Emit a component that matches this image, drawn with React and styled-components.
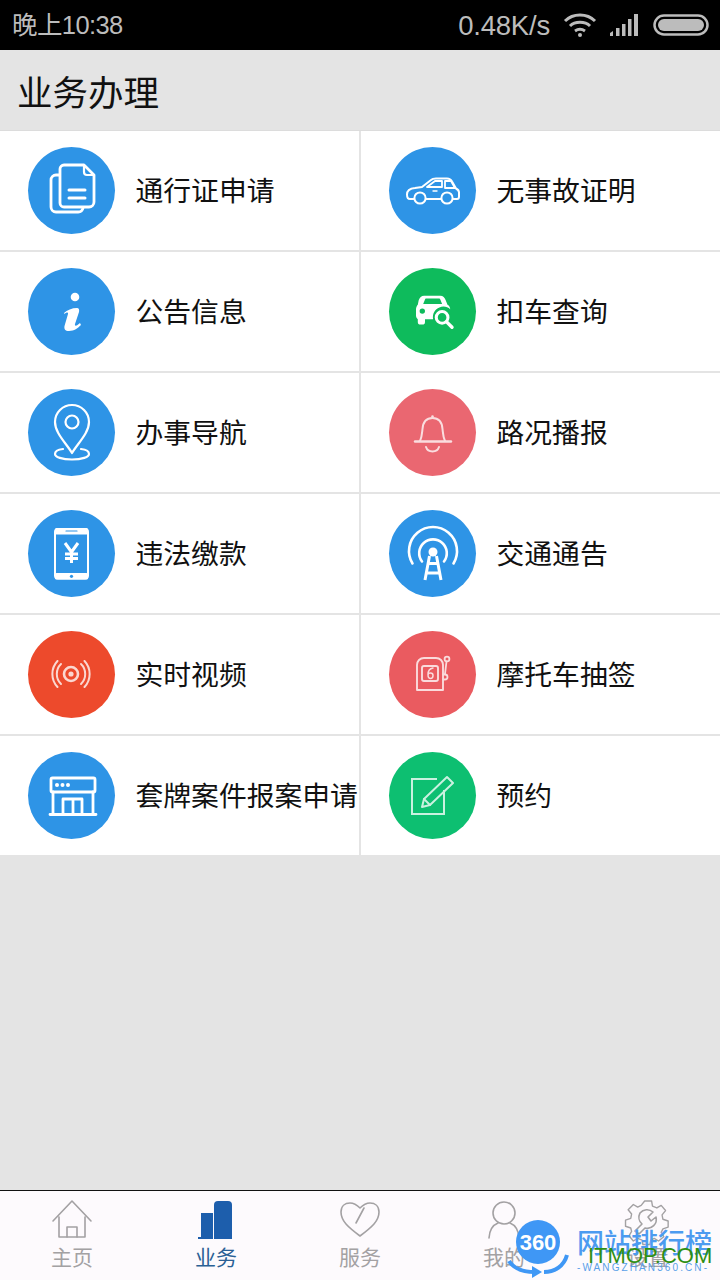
import React from "react";
import styled, { createGlobalStyle } from "styled-components";

const Global = createGlobalStyle`
  html, body { margin: 0; padding: 0; background: #e4e4e4; }
  * { box-sizing: border-box; }
  body { font-family: "Noto Sans CJK SC", "Liberation Sans", sans-serif; }
`;

const Page = styled.div`
  position: relative;
  width: 720px;
  height: 1280px;
  display: flex;
  flex-direction: column;
  overflow: hidden;
  background: #e4e4e4;
`;

const StatusBar = styled.div`
  height: 50px;
  flex: none;
  background: #000;
  color: #bcbcbc;
  display: flex;
  align-items: center;
  padding: 0 11px 0 12px;
  font-family: "Liberation Sans", "Noto Sans CJK SC", sans-serif;
`;

const Clock = styled.span`
  flex: 1;
  font-size: 25.5px;
  letter-spacing: -0.6px;
  margin-bottom: 5px;
`;

const Speed = styled.span`
  font-size: 27.5px;
  letter-spacing: -0.2px;
  margin: 2px 13px 0 0;
`;

const StatusIcons = styled.div`
  display: flex;
  align-items: center;
  gap: 12px;
`;

const Header = styled.div`
  height: 81px;
  flex: none;
  display: flex;
  align-items: center;
  padding: 0 0 0 17px;
  font-size: 35.5px;
  color: #111;
  background: #e4e4e4;
  border-bottom: 1px solid #dcdcdc;
`;

const Grid = styled.div`
  flex: none;
  display: grid;
  grid-template-columns: 361px 359px;
  background: #fff;
`;

const Cell = styled.div`
  height: ${(p) => (p.$last ? "119px" : "121px")};
  display: flex;
  align-items: center;
  padding-left: 28px;
  gap: 20.5px;
  background: #fff;
  border-bottom: ${(p) => (p.$last ? "none" : "2px solid #e4e4e4")};
  border-right: ${(p) => (p.$right ? "none" : "2px solid #e4e4e4")};
  white-space: nowrap;
`;

const Badge = styled.div`
  width: 87px;
  height: 87px;
  flex: none;
  border-radius: 50%;
  background: ${(p) => p.$color};
  display: flex;
  align-items: center;
  justify-content: center;
`;

const Label = styled.span`
  font-size: 27.8px;
  color: #111;
  line-height: 1;
  margin-bottom: 2px;
`;

const Spacer = styled.div`
  flex: 1;
`;

const TabBar = styled.div`
  height: 90px;
  flex: none;
  display: grid;
  grid-template-columns: repeat(5, 1fr);
  background: #fdfafd;
  border-top: 1px solid #111;
`;

const Tab = styled.div`
  display: flex;
  flex-direction: column;
  align-items: center;
  justify-content: flex-start;
  padding-top: 9px;
  font-size: 21px;
  line-height: 1;
  color: ${(p) => (p.$active ? "#2a6095" : "#a3a1a3")};
`;

const TabIcon = styled.svg`
  display: block;
  width: 44px;
  height: 40px;
  margin-bottom: 6px;
  overflow: visible;
`;

const Watermark = styled.div`
  position: absolute;
  left: 505px;
  top: 1215px;
  width: 215px;
  height: 65px;
  pointer-events: none;
`;

const Logo360 = styled.svg`
  position: absolute;
  left: 0;
  top: 0;
`;

const CnMark = styled.span`
  position: absolute;
  left: 72px;
  top: 13px;
  font-size: 27px;
  line-height: 1;
  font-weight: 500;
  color: #4c9bf0;
  white-space: nowrap;
`;

const GreenMark = styled.span`
  position: absolute;
  left: 83px;
  top: 30px;
  font-family: "Liberation Sans", sans-serif;
  font-size: 22px;
  line-height: 1;
  color: #2f8f12;
  white-space: nowrap;
`;

const UrlMark = styled.span`
  position: absolute;
  left: 72px;
  top: 48px;
  font-family: "Liberation Sans", sans-serif;
  font-size: 10px;
  line-height: 1;
  letter-spacing: 2.1px;
  color: #5a9fe8;
  white-space: nowrap;
`;

const S = {
  fill: "none",
  stroke: "#fff",
  strokeWidth: 2.4,
  strokeLinejoin: "round",
  strokeLinecap: "round",
};

const Ico = ({ children, soft }) => (
  <svg width="87" height="87" viewBox="0 0 87 87">
    <g {...S} opacity={soft ? 0.78 : 1}>
      {children}
    </g>
  </svg>
);

const icons = {
  docs: (
    <Ico>
      <path d="M31 28h-3a5 5 0 0 0-5 5v27a5 5 0 0 0 5 5h22a5 5 0 0 0 5-4" strokeWidth="2.800" />
      <path d="M36 18h20l10 10v27a5 5 0 0 1-5 5H36a4 4 0 0 1-4-4V22a4 4 0 0 1 4-4z" strokeWidth="2.800" />
      <path d="M56 19v6a3 3 0 0 0 3 3h6" strokeWidth="2.200" />
      <path d="M41 43h16M41 51h16" strokeWidth="3" />
    </Ico>
  ),
  info: (
    <Ico>
      <circle cx="47" cy="29" r="4.300" fill="#fff" stroke="none" />
      <path
        d="M36 45c3-3 8-5 13-5 2 0 2.500 2 2 4l-4 12c-.5 2 1 2 2.500 1l2.500-2 1 2c-3 3-7 6-12 6-4 0-5-2-4.500-5l3.500-12c.4-2-1.500-2-3.500 0z"
        fill="#fff"
        stroke="none"
      />
    </Ico>
  ),
  pin: (
    <Ico>
      <path d="M44 64 C38 54 27 44 27 33 a17 17 0 0 1 34 0 C61 44 50 54 44 64z" strokeWidth="2.200" />
      <circle cx="44" cy="33" r="6.500" strokeWidth="2.200" />
      <path d="M35 60c-5 .5-8 2-8 5 0 3 7 5.500 17 5.500s17-2.500 17-5.500c0-3-3-4.500-8-5" strokeWidth="2.200" />
    </Ico>
  ),
  phone: (
    <Ico>
      <rect x="27" y="19" width="33" height="49.500" rx="3" strokeWidth="2" />
      <rect x="27" y="18" width="33" height="6.500" rx="1.500" fill="#fff" stroke="none" />
      <rect x="27" y="63" width="33" height="6.500" rx="1.500" fill="#fff" stroke="none" />
      <path d="M38 21h11" stroke="#2e94e6" strokeWidth="1.200" />
      <circle cx="43.500" cy="66.300" r="1.600" fill="#2e94e6" stroke="none" />
      <path d="M37 33l6.500 9L50 33M43.500 42v11M37 44h13M37 48.500h13" strokeWidth="3" strokeLinecap="butt" />
    </Ico>
  ),
  radar: (
    <Ico soft>
      <circle cx="43" cy="43" r="2.600" fill="#fff" stroke="none" />
      <circle cx="43" cy="43" r="7" strokeWidth="2.600" />
      <path d="M33 33a14 14 0 0 0 0 20M53 33a14 14 0 0 1 0 20" strokeWidth="2" />
      <path d="M29.500 30a19 19 0 0 0 0 26M56.500 30a19 19 0 0 1 0 26" strokeWidth="2" />
    </Ico>
  ),
  shop: (
    <Ico>
      <rect x="23" y="26" width="44" height="14" rx="1.500" strokeWidth="2.800" />
      <circle cx="29" cy="33" r="2" fill="#fff" stroke="none" />
      <circle cx="34.500" cy="33" r="2" fill="#fff" stroke="none" />
      <circle cx="40" cy="33" r="2" fill="#fff" stroke="none" />
      <path d="M25 40v22M65 40v22M22 62.500h46" strokeWidth="2.800" />
      <path d="M35 62V47h19v15M45 47v15" strokeWidth="2.800" />
    </Ico>
  ),
  car: (
    <Ico>
      <path d="M25 52h-4c-2 0-3-2-3-4.500 0-3.500 3-6 8-6.500l7-1 9-7c1-1 3-1.500 5-1.500h11c3 0 4 1 5 3l4 7c2 1 3 2 3 4v4c0 2-1 2.500-2 2.500h-4" strokeWidth="2" />
      <path d="M37 52h15M38 40l8-6h7v6zM56 34h6l4 7H56z" strokeWidth="1.800" />
      <circle cx="31" cy="51" r="5.600" strokeWidth="2" />
      <circle cx="58" cy="51" r="5.600" strokeWidth="2" />
      <path d="M44 44h4" strokeWidth="1.400" />
    </Ico>
  ),
  carSearch: (
    <Ico>
      <g transform="translate(4.500 3.500) scale(.9)">
        <path
          d="M28 32c1-3 3-5 6-5h18c3 0 5 2 6 5l2 5c2 1 3 3 3 5-3-3-8-4-12-2-5 2-8 7-7 13H35v3c0 2-1 3-3 3h-2c-2 0-3-1-3-3v-3c-1-1-2-2-2-4V42c0-2 1-4 2-5z"
          fill="#fff"
          stroke="none"
        />
        <path d="M33 36l2-5c.3-1 1-1 2-1h13c1 0 1.500 0 2 1l2 5z" fill="#0ebb5c" stroke="none" />
        <circle cx="32" cy="44" r="3" fill="#0ebb5c" stroke="none" />
        <circle cx="54" cy="51" r="6.500" strokeWidth="3.400" />
        <path d="M59 56l6 6" strokeWidth="3.800" />
      </g>
    </Ico>
  ),
  bell: (
    <Ico soft>
      <circle cx="43.500" cy="27.500" r="1.300" fill="#fff" stroke="none" />
      <path d="M31 52c2-4 2-8 2.500-12 .5-7 4-11 10-11s9.500 4 10 11c.5 4 .5 8 2.500 12" strokeWidth="2" />
      <path d="M26 52.500h36" strokeWidth="2.400" />
      <path d="M37 58c1 3 3.500 4.500 6.500 4.500s5.500-1.500 6.500-4.500" strokeWidth="2" />
    </Ico>
  ),
  tower: (
    <Ico>
      <path d="M23.500 53.500A24 24 0 1 1 64.500 53.500" strokeWidth="2.600" />
      <path d="M33 51.500A13.800 13.800 0 1 1 55 51.500" strokeWidth="2.600" />
      <circle cx="44" cy="42" r="4.500" fill="#fff" stroke="none" />
      <path d="M40.500 46l-4.500 24M47.500 46l4.500 24M38 53.500h12M36.500 63h15" strokeWidth="3" strokeLinecap="butt" />
    </Ico>
  ),
  slot: (
    <Ico soft>
      <path d="M28 34c0-4 3-7 7-7h12c4 0 7 3 7 7v25H28z" strokeWidth="1.900" />
      <rect x="33" y="35" width="16" height="15" rx="2" strokeWidth="1.900" />
      <path d="M44 37c-3 .5-5 3-5 6.500 0 2.500 1 4 2.500 4s2.500-1.500 2.500-3-1-2.500-2.500-2.500-2.500 1-2.500 2" strokeWidth="1.500" />
      <circle cx="58" cy="28" r="2.400" strokeWidth="1.800" />
      <path d="M57.500 30.500L56 43" strokeWidth="1.800" />
      <path d="M54 43.500h2a2.500 2.500 0 0 1 0 5h-2" strokeWidth="1.800" />
    </Ico>
  ),
  edit: (
    <Ico soft>
      <path d="M48 27H23v35h32V38" strokeWidth="2" strokeLinecap="butt" strokeLinejoin="miter" />
      <path d="M35 47l23-22 6 6-23 22-8 2z" strokeWidth="2" />
      <path d="M35 47l6 6" strokeWidth="2" />
    </Ico>
  ),
};

const BLUE = "#2e94e6";
const rows = [
  [["docs", BLUE, "通行证申请"], ["car", BLUE, "无事故证明"]],
  [["info", BLUE, "公告信息"], ["carSearch", "#0ebb5c", "扣车查询"]],
  [["pin", BLUE, "办事导航"], ["bell", "#ea6771", "路况播报"]],
  [["phone", BLUE, "违法缴款"], ["tower", BLUE, "交通通告"]],
  [["radar", "#ed4a2c", "实时视频"], ["slot", "#ea5b60", "摩托车抽签"]],
  [["shop", BLUE, "套牌案件报案申请"], ["edit", "#0dbf71", "预约"]],
];

const grey = { fill: "none", stroke: "#a3a1a3", strokeWidth: 1.6, strokeLinejoin: "round", strokeLinecap: "round" };

const tabs = [
  {
    label: "主页",
    icon: (
      <g {...grey}>
        <path d="M3 21L22 1l19 20M9 17v20h26V17" />
        <path d="M17 37V27h10v10" />
      </g>
    ),
  },
  {
    label: "业务",
    active: true,
    icon: (
      <g fill="#1d5eac">
        <rect x="7" y="13" width="12" height="24" />
        <path d="M20 5q0-4 4-4h10q4 0 4 4v32H20z" />
        <rect x="4" y="37" width="15" height="2" />
        <rect x="20" y="37" width="18" height="2" />
      </g>
    ),
  },
  {
    label: "服务",
    icon: (
      <g {...grey}>
        <path d="M22 36C10 27 3 21 3 12 3 6 7 3 12 3c4 0 7 2 10 5 3-3 6-5 10-5 5 0 9 3 9 9 0 9-7 15-19 24z" />
        <path d="M18 23l8-15" />
      </g>
    ),
  },
  {
    label: "我的",
    icon: (
      <g {...grey}>
        <circle cx="22" cy="13" r="11" />
        <path d="M7 38c.5-8 4-13 9-15M37 38c-.5-8-4-13-9-15" />
      </g>
    ),
  },
  {
    label: "设置",
    icon: (
      <g {...grey}>
        <path d="M18 0h8l1 6 5 2 5-3 5 6-4 5 1 5 6 2v7l-6 2-2 4 3 5-6 5-5-3-4 2-1 5h-8l-1-5-5-2-5 3-5-6 3-5-1-4-6-2v-7l6-2 1-5-4-5 6-6 5 3 4-2z" transform="translate(3 1) scale(.87)" />
        <path d="M14 13a9 9 0 0 1 13-1l-5 5 3 4 5-4a9 9 0 0 1-11 11l-6 6-4-3 7-7a9 9 0 0 1-2-11z" />
      </g>
    ),
  },
];

export default function App() {
  return (
    <Page>
      <Global />
      <StatusBar>
        <Clock>晚上10:38</Clock>
        <Speed>0.48K/s</Speed>
        <StatusIcons>
          <svg width="34" height="24" viewBox="0 0 34 24" fill="none" stroke="#bcbcbc" strokeWidth="3">
            <path d="M2 8c8-8 22-8 30 0M7 13c5-5 15-5 20 0M12 18c3-2 7-2 10 0" />
            <circle cx="17" cy="22" r="2" fill="#bcbcbc" stroke="none" />
          </svg>
          <svg width="32" height="22" viewBox="0 0 32 22" fill="#bcbcbc">
            <path d="M1 19l3-2v5H1z" />
            <rect x="7" y="14" width="3.500" height="8" />
            <rect x="13" y="10" width="3.500" height="12" />
            <rect x="19" y="5" width="3.500" height="17" />
            <rect x="25" y="0" width="4" height="22" />
          </svg>
          <svg width="56" height="22" viewBox="0 0 56 22">
            <rect x="1.500" y="1.500" width="53" height="19" rx="9.500" fill="none" stroke="#bcbcbc" strokeWidth="2.500" />
            <rect x="5" y="5" width="46" height="12" rx="6" fill="#bcbcbc" />
          </svg>
        </StatusIcons>
      </StatusBar>
      <Header>业务办理</Header>
      <Grid>
        {rows.flatMap((row, r) =>
          row.map(([icon, color, text], c) => (
            <Cell key={text} $right={c === 1} $last={r === rows.length - 1}>
              <Badge $color={color}>{icons[icon]}</Badge>
              <Label>{text}</Label>
            </Cell>
          ))
        )}
      </Grid>
      <Spacer />
      <TabBar>
        {tabs.map((t) => (
          <Tab key={t.label} $active={t.active}>
            <TabIcon viewBox="0 0 44 40">{t.icon}</TabIcon>
            {t.label}
          </Tab>
        ))}
      </TabBar>
      <Watermark>
        <Logo360 width="66" height="65" viewBox="0 0 66 65">
          <circle cx="33" cy="27" r="22" fill="#3f97f5" />
          <path d="M4 46c5 8 15 11 26 11" fill="none" stroke="#3f97f5" strokeWidth="4" />
          <path d="M27 51l10 6-10 6z" fill="#3f97f5" />
          <path d="M39 57c11 0 20-6 23-17" fill="none" stroke="#3f97f5" strokeWidth="4" />
          <text x="33" y="35" textAnchor="middle" fontFamily="Liberation Sans, sans-serif" fontSize="22" fontWeight="700" fill="#fff">360</text>
        </Logo360>
        <CnMark>网站排行榜</CnMark>
        <GreenMark>ITMOP.COM</GreenMark>
        <UrlMark>-WANGZHAN360.CN-</UrlMark>
      </Watermark>
    </Page>
  );
}
